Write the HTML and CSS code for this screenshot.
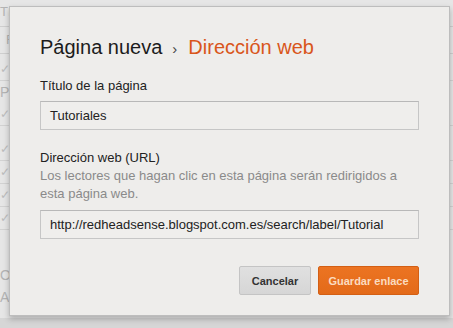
FILE: index.html
```html
<!DOCTYPE html>
<html lang="es">
<head>
<meta charset="utf-8">
<link rel="stylesheet" href="styles.css">
</head>
<body>
<div class="page">
  <div class="bg-title">Título de la página</div>
  <div class="bg-box">F</div>
  <div class="bg-check">✓</div>
  <div class="bg-text">Pá</div>
  <div class="bg-check">✓</div>
  <div class="bg-check gap">✓</div>
  <div class="bg-check">✓</div>
  <div class="bg-check">✓</div>
  <div class="bg-check">✓</div>
  <div class="bg-text low">O</div>
  <div class="bg-text">A</div>
</div>
<div class="dialog">
  <h1 class="title"><span class="crumb">Página nueva</span><span class="sep">›</span><span class="current">Dirección web</span></h1>
  <label class="label">Título de la página</label>
  <div class="input">Tutoriales</div>
  <label class="label second">Dirección web (URL)</label>
  <p class="hint">Los lectores que hagan clic en esta página serán redirigidos a esta página web.</p>
  <div class="input url">http://redheadsense.blogspot.com.es/search/label/Tutorial</div>
  <div class="actions">
    <button class="btn cancel">Cancelar</button>
    <button class="btn save">Guardar enlace</button>
  </div>
</div>
</body>
</html>
```
FILE: styles.css
```css
html, body {
  margin: 0;
  padding: 0;
}
body {
  width: 453px;
  height: 328px;
  background: #d6d6d6;
  font-family: "Liberation Sans", Arial, sans-serif;
  overflow: hidden;
  position: relative;
}
.page {
  width: 453px;
  height: 318px;
  background: #e6e6e6;
  color: #b4b4b4;
  font-size: 13px;
  padding: 4px 0 0 0;
  box-sizing: border-box;
}
.bg-title {
  padding-left: 0;
  height: 22px;
  line-height: 16px;
  white-space: nowrap;
}
.bg-box {
  height: 26px;
  line-height: 26px;
  border-top: 1px solid #cfcfcf;
  border-bottom: 1px solid #cfcfcf;
  padding-left: 6px;
  margin-bottom: 4px;
}
.bg-check {
  height: 22px;
  line-height: 22px;
  border-bottom: 1px solid #d2d2d2;
  color: #bdbdbd;
  font-size: 12px;
}
.bg-check.gap { margin-top: 12px; }
.bg-text {
  height: 22px;
  line-height: 22px;
  font-size: 14px;
}
.bg-text.low { margin-top: 34px; }
.dialog {
  position: absolute;
  left: 9px;
  top: 6px;
  width: 441px;
  height: 310px;
  box-sizing: border-box;
  background: #eeedeb;
  border: 1px solid #bdbdbd;
  box-shadow: 0 3px 6px rgba(0,0,0,0.25);
  padding: 26px 30px 0 30px;
}
.title {
  margin: 0;
  font-weight: normal;
  font-size: 20px;
  line-height: 28px;
  color: #1c1c1c;
  display: flex;
  align-items: baseline;
  white-space: nowrap;
}
.sep {
  font-size: 15px;
  color: #444;
  margin: 0 11px 0 10px;
}
.current {
  color: #d9561b;
}
.label {
  display: block;
  margin-top: 14px;
  font-size: 13px;
  line-height: 18px;
  color: #222;
}
.label.second { margin-top: 19px; }
.hint {
  margin: 0;
  font-size: 13px;
  line-height: 18px;
  color: #8a8a8a;
  width: 370px;
}
.input {
  margin-top: 6px;
  height: 29px;
  width: 379px;
  box-sizing: border-box;
  border: 1px solid #c6c6c6;
  border-top-color: #b8b8b8;
  background: #efeeec;
  padding: 0 9px;
  font-size: 13px;
  line-height: 27px;
  color: #222;
  white-space: nowrap;
}
.input.url { margin-top: 7px; }
.actions {
  display: flex;
  justify-content: flex-end;
  gap: 7px;
  width: 379px;
  margin-top: 27px;
}
.btn {
  height: 29px;
  font-family: "Liberation Sans", Arial, sans-serif;
  font-size: 11px;
  font-weight: bold;
  border-radius: 2px;
  padding: 0;
  cursor: pointer;
}
.cancel {
  width: 72px;
  background: linear-gradient(#e0e0e0, #d6d6d6);
  border: 1px solid #c4c4c4;
  color: #333;
}
.save {
  width: 101px;
  background: linear-gradient(#ec7422, #e36a19);
  border: 1px solid #d35f14;
  color: #fbdcc0;
}
```
